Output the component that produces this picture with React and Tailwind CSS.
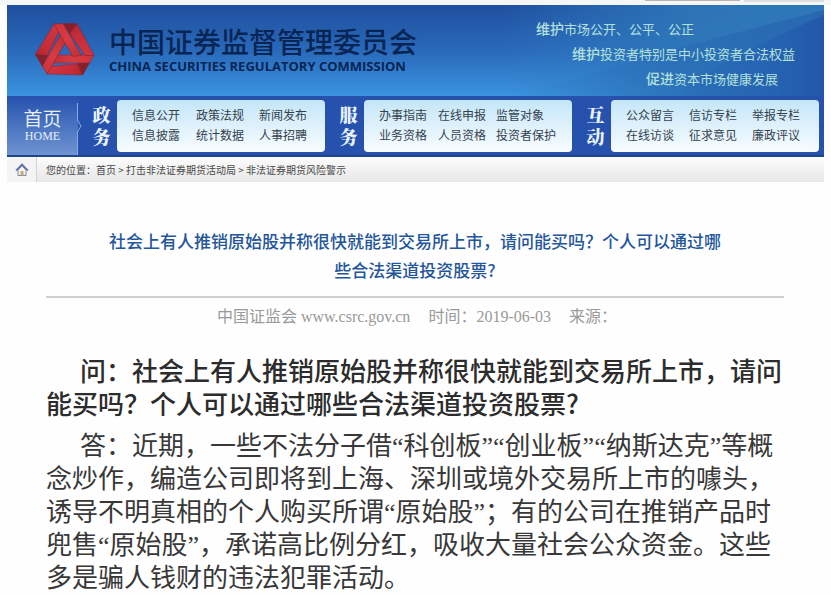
const groups = [
  {
    name: ["政", "务"],
    cols: "grid-cols-[64px_63px_auto]",
    links: ["信息公开", "政策法规", "新闻发布", "信息披露", "统计数据", "人事招聘"],
  },
  {
    name: ["服", "务"],
    cols: "grid-cols-[59px_58px_auto]",
    links: ["办事指南", "在线申报", "监管对象", "业务资格", "人员资格", "投资者保护"],
  },
  {
    name: ["互", "动"],
    cols: "grid-cols-[63px_63px_auto]",
    links: ["公众留言", "信访专栏", "举报专栏", "在线访谈", "征求意见", "廉政评议"],
  },
];

function Logo() {
  return (
    <svg viewBox="-30 -29 60 54" className="h-[54px] w-[60px] shrink-0" aria-hidden="true">
      <defs>
        <linearGradient id="inner" x1="0" y1="0" x2="1" y2="0">
          <stop offset="0" stopColor="#c22f38" />
          <stop offset="0.5" stopColor="#d93a42" />
          <stop offset="1" stopColor="#cf343d" />
        </linearGradient>
        <linearGradient id="outer" x1="0" y1="0" x2="1" y2="0">
          <stop offset="0" stopColor="#d0363f" />
          <stop offset="0.6" stopColor="#c62d38" />
          <stop offset="1" stopColor="#a3202c" />
        </linearGradient>
      </defs>
      {[0, 120, 240].map((turn) => (
        <g key={turn} transform={`rotate(${turn})`} stroke="#7d2434" strokeWidth="0.5" strokeLinejoin="round">
          <path d="M-14 15 L-18.3 23 L17.5 24 L24 12 Z" fill="url(#outer)" />
          <path d="M13 12.8 L24.5 12 L17.5 24 Z" fill="#86202b" />
          <path d="M-8.7 4 L29 4 L24.5 12 L-12 12 Z" fill="url(#inner)" />
        </g>
      ))}
    </svg>
  );
}

function HouseIcon() {
  return (
    <svg viewBox="0 0 14 14" className="size-[14px]" aria-hidden="true">
      <path d="M3 7 V12.5 H11 V7 L7 3 Z" fill="#f5f3ee" stroke="#8087a5" />
      <path d="M1 7.5 L7 1.5 L13 7.5" fill="none" stroke="#5c70a8" strokeWidth="1.6" />
      <rect x="5.5" y="8" width="3" height="4.5" fill="#c3a878" />
    </svg>
  );
}

function Header() {
  return (
    <header className="relative flex h-[91px] items-start bg-linear-to-b from-[#1f4f9e] via-[#2a69ba] to-[#3b94df]">
      <svg viewBox="0 0 324 91" preserveAspectRatio="none" className="absolute right-0 top-0 h-full w-[324px]" aria-hidden="true">
        <defs>
          <linearGradient id="glow" x1="0" y1="0" x2="1" y2="0">
            <stop offset="0" stopColor="#2f7fc4" stopOpacity="0" />
            <stop offset="0.6" stopColor="#2e78b8" stopOpacity="0.9" />
            <stop offset="1" stopColor="#2f78b8" />
          </linearGradient>
          <linearGradient id="shade" x1="0" y1="0" x2="1" y2="0">
            <stop offset="0" stopColor="#2563b2" stopOpacity="0" />
            <stop offset="0.6" stopColor="#2563b2" stopOpacity="0.8" />
            <stop offset="1" stopColor="#2257a8" />
          </linearGradient>
        </defs>
        <rect width="324" height="91" fill="url(#glow)" />
        <path d="M324 5 Q250 24 190 40 Q100 64 20 91 H324 Z" fill="url(#shade)" opacity="0.5" />
        <path d="M324 10 Q260 38 214 64 Q190 78 176 91 H324 Z" fill="url(#shade)" />
      </svg>
      <div className="relative flex min-w-0 flex-1 items-start pl-7 pt-[17px]">
        <Logo />
        <div className="ml-[14px] mt-[3px] whitespace-nowrap text-[#082554]">
          <h1 className="text-[28px] font-medium leading-[32px]">中国证券监督管理委员会</h1>
          <p className="font-['Open_Sans','Noto_Sans',sans-serif] text-[13px] font-bold leading-[18px]">
            CHINA SECURITIES REGULATORY COMMISSION
          </p>
        </div>
      </div>
      <div className="relative shrink-0 whitespace-nowrap pr-[29px] pt-[11px] text-[13px] leading-[24px] text-[#b4e0dc]">
        <p><b className="text-[14px] font-medium">维护</b>市场公开、公平、公正</p>
        <p className="pl-9"><b className="text-[14px] font-medium">维护</b>投资者特别是中小投资者合法权益</p>
        <p className="pl-[110px]"><b className="text-[14px] font-medium">促进</b>资本市场健康发展</p>
      </div>
    </header>
  );
}

function Nav() {
  return (
    <nav className="flex h-[61px] border-b-2 border-[#1f4687] bg-[#2651ad] pr-[5px]">
      <a href="#home" className="relative flex w-[71px] shrink-0 flex-col items-center bg-linear-to-b from-[#2651ad] to-[#6f94d1] pt-[11px] text-[#e4effb]">
        <span className="text-[19px] leading-[22px]">首页</span>
        <span className="font-['Liberation_Serif',serif] text-[12px] leading-[14px]">HOME</span>
        <svg viewBox="0 0 8 52" className="absolute -right-1 top-[7px] h-[52px] w-2" fill="none" stroke="#86abe0" aria-hidden="true">
          <path d="M3.5 0 V17 L7 23 L3.5 29 V52" />
        </svg>
      </a>
      {groups.map((g) => (
        <section key={g.name.join("")} className="flex flex-1">
          <h2 className="flex w-[39px] shrink-0 flex-col items-center pl-[8px] pt-[7px] font-['Noto_Serif_CJK_SC','Noto_Sans_CJK_SC',serif] text-[18px] font-black leading-[22px] text-[#e9f4ff]">
            {g.name.map((c) => (
              <span key={c}>{c}</span>
            ))}
          </h2>
          <ul className={`mt-1 grid h-[52px] flex-1 content-start whitespace-nowrap rounded bg-linear-to-b from-[#c4e6f8] to-[#f8fcff] pl-[15px] pt-[5px] text-[12px] leading-[20px] text-[#35424e] ${g.cols}`}>
            {g.links.map((l) => (
              <li key={l}>
                <a href="#section">{l}</a>
              </li>
            ))}
          </ul>
        </section>
      ))}
    </nav>
  );
}

function Breadcrumb() {
  return (
    <div className="flex h-[25px] items-stretch bg-linear-to-b from-[#fcfcfc] to-[#e7e7e7] text-[10px] text-[#484848]">
      <a href="#home" aria-label="首页" className="flex w-[30px] items-center justify-center border-r border-[#d2d2d2] bg-[#f4f4f4]">
        <HouseIcon />
      </a>
      <p className="flex items-center whitespace-pre pl-[9px]">
        您的位置：<a href="#home">首页</a> &gt; <a href="#bureau">打击非法证券期货活动局</a> &gt; <a href="#risk">非法证券期货风险警示</a>
      </p>
    </div>
  );
}

export default function App() {
  return (
    <div lang="zh-CN" className="min-h-screen overflow-hidden bg-[#fefefe] font-['Noto_Sans_CJK_SC',sans-serif]">
      <div className="flex h-[5px] justify-end bg-[#f4f6f7] pr-[7px]">
        <div className="mr-1 h-px w-[95px] bg-[#b9b5b5]" />
        <div className="h-[2px] w-[80px] bg-[#dedede]" />
      </div>
      <div className="mx-[7px]">
        <Header />
        <Nav />
        <Breadcrumb />
      </div>
      <main className="pl-[46px] pr-[47px]">
        <h2 className="border-b-2 border-[#cfcfcf] px-[60px] pb-3 pt-[44px] text-center text-[17px] font-medium leading-[29px] text-[#24569a]">
          社会上有人推销原始股并称很快就能到交易所上市，请问能买吗？个人可以通过哪些合法渠道投资股票?
        </h2>
        <div className="mt-2 flex justify-center gap-[18px] pl-1 font-['Liberation_Serif','Noto_Sans_CJK_SC',serif] text-[16px] leading-[22px] text-[#9a9a9a]">
          <span>中国证监会 www.csrc.gov.cn</span>
          <span>时间：2019-06-03</span>
          <span>来源：</span>
        </div>
        <article className="mt-[25px] font-['Liberation_Serif','Noto_Sans_CJK_SC',serif] text-[26px] leading-[33px] text-[#383838]">
          <p className="indent-[34px] font-['Noto_Sans_CJK_SC',sans-serif] font-medium text-[#2c2c2c]">
            问：社会上有人推销原始股并称很快就能到交易所上市，请问能买吗？个人可以通过哪些合法渠道投资股票?
          </p>
          <p className="mt-[11px] indent-[34px]">
            答：近期，一些不法分子借“科创板”“创业板”“纳斯达克”等概念炒作，编造公司即将到上海、深圳或境外交易所上市的噱头，诱导不明真相的个人购买所谓“原始股”；有的公司在推销产品时兜售“原始股”，承诺高比例分红，吸收大量社会公众资金。这些多是骗人钱财的违法犯罪活动。
          </p>
        </article>
      </main>
    </div>
  );
}
